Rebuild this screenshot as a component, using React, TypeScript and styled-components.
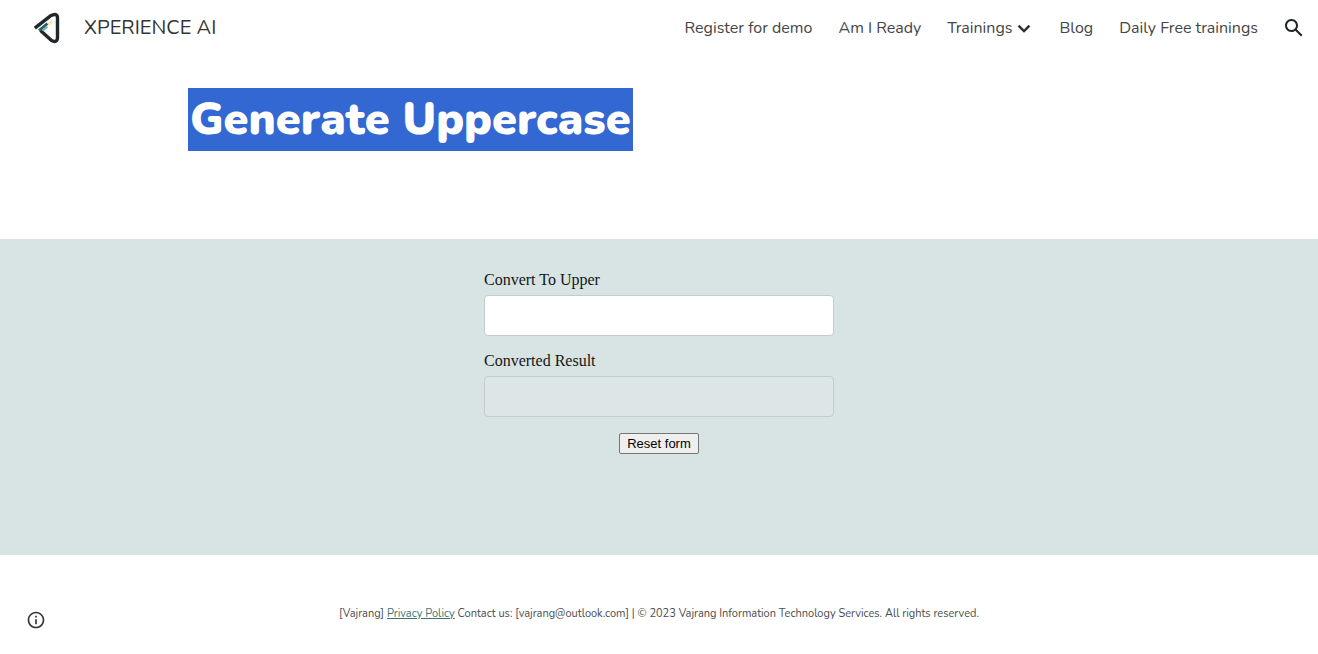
import React, { useState } from "react";
import styled, { createGlobalStyle } from "styled-components";

const GlobalStyle = createGlobalStyle`
  * { box-sizing: border-box; }
  body {
    margin: 0;
    background: #fff;
    color: #3c3e3f;
    font-family: Nunito, Lato, sans-serif;
  }
`;

const Page = styled.div`
  display: flex;
  flex-direction: column;
  min-height: 100vh;
`;

const Header = styled.header`
  display: flex;
  align-items: center;
  justify-content: space-between;
  height: 56px;
  padding: 0 12px 0 32px;
`;

const Brand = styled.a`
  display: flex;
  align-items: center;
  gap: 22px;
  color: #333536;
  font-size: 20px;
  line-height: 26px;
  text-decoration: none;
`;

const Nav = styled.nav`
  display: flex;
  align-items: center;
  gap: 24px;
`;

const NavList = styled.div`
  display: flex;
  align-items: center;
  gap: 26px;
`;

const NavLink = styled.a`
  color: #444647;
  font-size: 16px;
  line-height: 24px;
  white-space: nowrap;
  text-decoration: none;
`;

const NavGroup = styled.div`
  display: flex;
  align-items: center;
`;

const IconButton = styled.button`
  display: flex;
  padding: 0;
  border: 0;
  background: none;
  color: #212424;
  cursor: pointer;
`;

const TitleSection = styled.section`
  padding: 32px 188px 88px;
`;

const Title = styled.h1`
  width: fit-content;
  margin: 0;
  padding: 0 2px;
  background: #3367d1;
  color: #fff;
  font-size: 45px;
  font-weight: 900;
  line-height: 63px;
  white-space: nowrap;
`;

const Band = styled.section`
  display: flex;
  justify-content: center;
  padding: 32px 16px 101px;
  background: #d8e3e3;
`;

const Form = styled.form`
  display: flex;
  flex-direction: column;
  align-items: center;
  gap: 16px;
  width: 100%;
  max-width: 350px;
`;

const Field = styled.div`
  display: flex;
  flex-direction: column;
  gap: 6px;
  width: 100%;
`;

const Label = styled.label`
  color: #111616;
  font-family: "Liberation Serif", serif;
  font-size: 16px;
  line-height: 18px;
`;

const TextInput = styled.input`
  width: 100%;
  height: 41px;
  padding: 8px 12px;
  border: 1px solid #c3cccc;
  border-radius: 4px;
  background: #fff;
  font-family: "Liberation Sans", sans-serif;
  font-size: 14px;

  &:disabled {
    background: #dde6e6;
  }
`;

const ResetButton = styled.button`
  height: 21px;
  padding: 0 7px;
  border: 1px solid #767676;
  border-radius: 2px;
  background: #efefef;
  color: #000;
  font-family: "Liberation Sans", sans-serif;
  font-size: 13px;
  line-height: 15px;
  white-space: nowrap;
`;

const Footer = styled.footer`
  display: grid;
  grid-template-columns: 72px 1fr 72px;
  padding: 50px 0 24px;
`;

const InfoCell = styled.div`
  display: flex;
  justify-content: center;
  padding-top: 5px;
`;

const FooterText = styled.p`
  margin: 0;
  color: #4a4d4e;
  font-size: 11px;
  line-height: 18px;
  text-align: center;
`;

const PolicyLink = styled.a`
  color: #3b7478;
`;

const Logo = () => (
  <svg width="30" height="36" viewBox="0 0 30 36" fill="none" aria-hidden="true">
    <path d="M2.800 18.200 18.500 5.800Q25.500 2.300 25.500 8V27Q25.500 33.500 19.500 30.500L8.500 20.500" stroke="#20282d" strokeWidth="3.400" strokeLinejoin="round" />
    <path d="M7 20.500 15.500 13.500" stroke="#285d68" strokeWidth="2.800" />
    <path d="M10.500 20.800 15.500 16.800" stroke="#65b3b0" strokeWidth="1.800" />
    <path d="M15.500 13 20.500 9.500V13L17 16Z" fill="#f1ecad" />
  </svg>
);

const Chevron = () => (
  <svg width="21" height="24" viewBox="0 -1 21 24" fill="currentColor" aria-hidden="true">
    <path d="M7.410 8.090 12 12.670l4.590-4.580L18 9.500l-6 6-6-6z" stroke="currentColor" strokeWidth="0.400" />
  </svg>
);

const SearchIcon = () => (
  <svg width="24" height="24" viewBox="0 0 24 24" fill="currentColor" aria-hidden="true">
    <path d="M20.490 19l-5.730-5.730C15.530 12.200 16 10.910 16 9.500 16 5.910 13.090 3 9.500 3S3 5.910 3 9.500 5.910 16 9.500 16c1.410 0 2.700-.470 3.770-1.240L19 20.490 20.490 19zM5 9.500C5 7.010 7.010 5 9.500 5S14 7.010 14 9.500 11.990 14 9.500 14 5 11.990 5 9.500z" />
  </svg>
);

const InfoIcon = () => (
  <svg width="20" height="20" viewBox="0 0 24 24" fill="#333637" aria-hidden="true">
    <path d="M11 17h2v-6h-2v6zm1-15C6.480 2 2 6.480 2 12s4.480 10 10 10 10-4.480 10-10S17.520 2 12 2zm0 18c-4.410 0-8-3.590-8-8s3.590-8 8-8 8 3.590 8 8-3.590 8-8 8zM11 9h2V7h-2v2z" />
  </svg>
);

export default function App() {
  const [text, setText] = useState("");

  return (
    <Page>
      <GlobalStyle />
      <Header>
        <Brand href="#home">
          <Logo />
          XPERIENCE AI
        </Brand>
        <Nav>
          <NavList>
            <NavLink href="#register">Register for demo</NavLink>
            <NavLink href="#ready">Am I Ready</NavLink>
            <NavGroup>
              <NavLink href="#trainings">Trainings</NavLink>
              <IconButton type="button" aria-label="Show trainings">
                <Chevron />
              </IconButton>
            </NavGroup>
            <NavLink href="#blog">Blog</NavLink>
            <NavLink href="#daily">Daily Free trainings</NavLink>
          </NavList>
          <IconButton type="button" aria-label="Search">
            <SearchIcon />
          </IconButton>
        </Nav>
      </Header>
      <main>
        <TitleSection>
          <Title>Generate Uppercase</Title>
        </TitleSection>
        <Band>
          <Form onSubmit={(e) => e.preventDefault()} onReset={() => setText("")}>
            <Field>
              <Label htmlFor="source">Convert To Upper</Label>
              <TextInput id="source" value={text} onChange={(e) => setText(e.target.value)} />
            </Field>
            <Field>
              <Label htmlFor="result">Converted Result</Label>
              <TextInput id="result" value={text.toUpperCase()} disabled readOnly />
            </Field>
            <ResetButton type="reset">Reset form</ResetButton>
          </Form>
        </Band>
      </main>
      <Footer>
        <InfoCell>
          <IconButton type="button" aria-label="Site information">
            <InfoIcon />
          </IconButton>
        </InfoCell>
        <FooterText>
          [Vajrang] <PolicyLink href="#privacy">Privacy Policy</PolicyLink> Contact us: [vajrang@outlook.com] | © 2023 Vajrang Information Technology Services. All rights reserved.
        </FooterText>
      </Footer>
    </Page>
  );
}
